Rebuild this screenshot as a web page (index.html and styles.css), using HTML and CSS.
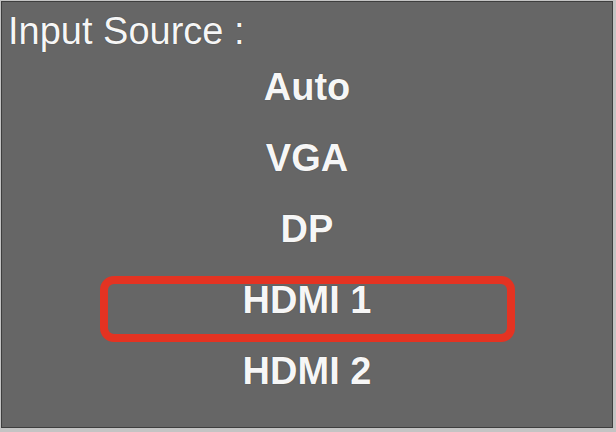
FILE: index.html
```html
<!DOCTYPE html>
<html>
<head>
<meta charset="utf-8">
<link rel="stylesheet" href="styles.css">
</head>
<body>
<div class="frame">
  <div class="title">Input Source :</div>
  <ul class="list">
    <li class="item">Auto</li>
    <li class="item">VGA</li>
    <li class="item">DP</li>
    <li class="item selected">HDMI 1</li>
    <li class="item">HDMI 2</li>
  </ul>
</div>
</body>
</html>
```
FILE: styles.css
```css
html, body {
  margin: 0;
  padding: 0;
}
body {
  background: #c4c4c4;
  width: 616px;
  height: 432px;
  padding: 1px 0 0 1px;
  box-sizing: border-box;
  overflow: hidden;
  font-family: "Liberation Sans", Arial, sans-serif;
}
.frame {
  width: 612px;
  height: 427px;
  box-sizing: border-box;
  border: 1px solid #3e3e3e;
  background: #666666;
  color: #f6f6f6;
}
.title {
  padding: 8px 0 0 6px;
  font-size: 38px;
  line-height: 42px;
  text-shadow: 0 0 1px #333;
}
.list {
  list-style: none;
  margin: 0;
  padding: 0;
}
.item {
  position: relative;
  text-align: center;
  font-size: 38px;
  font-weight: bold;
  line-height: 71px;
  height: 71px;
  text-shadow: 0 0 1px #333;
}
.selected::before {
  content: "";
  position: absolute;
  left: 98px;
  top: 11px;
  width: 415px;
  height: 66px;
  box-sizing: border-box;
  border: 8px solid #e43322;
  border-radius: 14px;
}
```
